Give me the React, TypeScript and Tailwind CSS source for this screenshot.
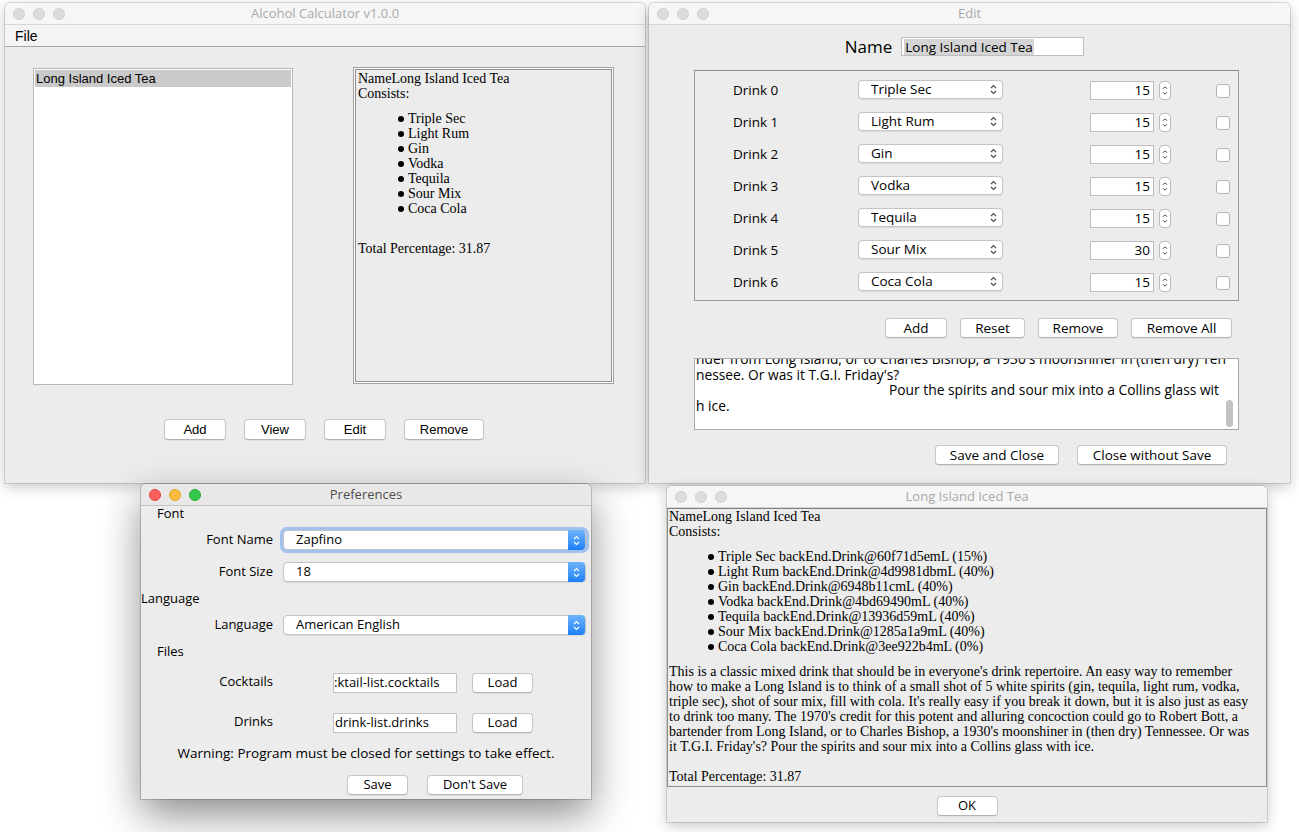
const UI = "font-['Open_Sans',sans-serif]";
const ARIAL = "font-['Liberation_Sans',Arial,sans-serif]";
const SERIF = "font-['Liberation_Serif','Times_New_Roman',serif]";

const EDIT_ROWS = [
  ["Triple Sec", "15"],
  ["Light Rum", "15"],
  ["Gin", "15"],
  ["Vodka", "15"],
  ["Tequila", "15"],
  ["Sour Mix", "30"],
  ["Coca Cola", "15"],
];

const VIEW_ITEMS = [
  "Triple Sec backEnd.Drink@60f71d5emL (15%)",
  "Light Rum backEnd.Drink@4d9981dbmL (40%)",
  "Gin backEnd.Drink@6948b11cmL (40%)",
  "Vodka backEnd.Drink@4bd69490mL (40%)",
  "Tequila backEnd.Drink@13936d59mL (40%)",
  "Sour Mix backEnd.Drink@1285a1a9mL (40%)",
  "Coca Cola backEnd.Drink@3ee922b4mL (0%)",
];

const DESCRIPTION = [
  "This is a classic mixed drink that should be in everyone's drink repertoire. An easy way to remember",
  "how to make a Long Island is to think of a small shot of 5 white spirits (gin, tequila, light rum, vodka,",
  "triple sec), shot of sour mix, fill with cola. It's really easy if you break it down, but it is also just as easy",
  "to drink too many. The 1970's credit for this potent and alluring concoction could go to Robert Bott, a",
  "bartender from Long Island, or to Charles Bishop, a 1930's moonshiner in (then dry) Tennessee. Or was",
  "it T.G.I. Friday's? Pour the spirits and sour mix into a Collins glass with ice.",
];

export default function App() {
  return (
    <div className="relative h-[832px] w-[1299px] overflow-hidden bg-white">
      <MainWindow />
      <EditWindow />
      <PreferencesWindow />
      <ViewWindow />
    </div>
  );
}

function Window({
  title,
  active = false,
  className,
  children,
}: {
  title: string;
  active?: boolean;
  className: string;
  children: React.ReactNode;
}) {
  return (
    <div
      className={`absolute flex flex-col overflow-hidden rounded-t-[5px] bg-[#ececec] ${
        active
          ? "shadow-[0_0_0_1px_rgba(0,0,0,0.18),0_16px_40px_rgba(0,0,0,0.45)]"
          : "shadow-[0_0_0_1px_rgba(0,0,0,0.12),0_4px_14px_rgba(0,0,0,0.22)]"
      } ${className}`}
    >
      <div
        className={`grid h-[22px] shrink-0 grid-cols-[80px_1fr_80px] items-center border-b ${
          active ? "border-[#c4c4c4] bg-[#e8e8e8]" : "border-[#d6d6d6] bg-[#f6f6f6]"
        }`}
      >
        <div className="flex items-center gap-[8px] pl-[8px]">
          {active ? (
            <>
              <span className="h-[12px] w-[12px] rounded-full border border-[#e0443e] bg-[#fc605c]" />
              <span className="h-[12px] w-[12px] rounded-full border border-[#dea123] bg-[#fdbc40]" />
              <span className="h-[12px] w-[12px] rounded-full border border-[#27aa35] bg-[#34c84a]" />
            </>
          ) : (
            <>
              <span className="h-[12px] w-[12px] rounded-full border border-[#d1d1d1] bg-[#dcdcdc]" />
              <span className="h-[12px] w-[12px] rounded-full border border-[#d1d1d1] bg-[#dcdcdc]" />
              <span className="h-[12px] w-[12px] rounded-full border border-[#d1d1d1] bg-[#dcdcdc]" />
            </>
          )}
        </div>
        <div
          className={`${UI} truncate text-center text-[13px] ${
            active ? "text-[#4d4d4d]" : "text-[#a9a9a9]"
          }`}
        >
          {title}
        </div>
        <div />
      </div>
      {children}
    </div>
  );
}

function MacButton({
  label,
  className,
  font = UI,
}: {
  label: string;
  className: string;
  font?: string;
}) {
  return (
    <div
      className={`${font} flex shrink-0 items-center justify-center rounded-[4px] border border-[#c6c6c6] border-b-[#b2b2b2] bg-white text-black shadow-[0_1px_1px_rgba(0,0,0,0.06)] ${className}`}
    >
      {label}
    </div>
  );
}

function UpDown({ color = "#4a4a4a", small = false }: { color?: string; small?: boolean }) {
  if (small) {
    return (
      <svg width="6" height="11" viewBox="0 0 6 11" fill="none" stroke={color} strokeWidth="1">
        <path d="M1 3.8 3 1.8 5 3.8" />
        <path d="M1 7.2 3 9.2 5 7.2" />
      </svg>
    );
  }
  return (
    <svg width="7" height="11" viewBox="0 0 7 11" fill="none" stroke={color} strokeWidth="1.1">
      <path d="M1 4 3.5 1.5 6 4" />
      <path d="M1 7 3.5 9.5 6 7" />
    </svg>
  );
}

function Bullet() {
  return <span className="mr-[4px] inline-block h-[6px] w-[6px] rounded-full bg-black align-[1px]" />;
}

/* ---------- Alcohol Calculator main window ---------- */

function MainWindow() {
  const ingredients = ["Triple Sec", "Light Rum", "Gin", "Vodka", "Tequila", "Sour Mix", "Coca Cola"];
  return (
    <Window title="Alcohol Calculator v1.0.0" className="left-[5px] top-[3px] h-[480px] w-[640px]">
      <div
        className={`${ARIAL} flex h-[22px] shrink-0 items-center border-b border-[#a6a6a6] bg-[#f4f4f4] pl-[10px] pt-px text-[14px] text-black`}
      >
        File
      </div>
      <div className="flex pl-[28px] pt-[20px]">
        <div className="mt-[1px] h-[317px] w-[260px] border border-[#b8b8b8] bg-white p-px">
          <div className={`${ARIAL} h-[17px] bg-[#cacaca] pl-px text-[13px] leading-[17px] text-black`}>
            Long Island Iced Tea
          </div>
        </div>
        <div className="ml-[60px] h-[317px] w-[261px] border border-[#a2a2a2] bg-white p-px">
          <div className={`${SERIF} h-full border border-[#8f8f8f] bg-[#ececec] pl-[2px] pt-[1px] text-[14px] leading-[15px] text-black`}>
            <div>NameLong Island Iced Tea</div>
            <div>Consists:</div>
            <div className="mt-[10px] pl-[40px]">
              {ingredients.map((name) => (
                <div key={name}>
                  <Bullet />
                  {name}
                </div>
              ))}
            </div>
            <div className="mt-[25px]">Total Percentage: 31.87</div>
          </div>
        </div>
      </div>
      <div className="mt-[34px] flex justify-center gap-[18px] pr-[2px]">
        <MacButton label="Add" font={ARIAL} className="h-[21px] w-[62px] text-[13px]" />
        <MacButton label="View" font={ARIAL} className="h-[21px] w-[62px] text-[13px]" />
        <MacButton label="Edit" font={ARIAL} className="h-[21px] w-[62px] text-[13px]" />
        <MacButton label="Remove" font={ARIAL} className="h-[21px] w-[80px] text-[13px]" />
      </div>
    </Window>
  );
}

/* ---------- Edit window ---------- */

function EditWindow() {
  return (
    <Window title="Edit" className="left-[649px] top-[3px] h-[480px] w-[641px]">
      <div className={`${UI} flex flex-col text-[13.5px] text-black`}>
        <div className="flex items-center justify-center gap-[9px] pr-[10px] pt-[12px]">
          <span className="text-[17px] leading-[19px]">Name</span>
          <div className="flex h-[19px] w-[183px] items-center border border-[#bdbdbd] bg-white pl-[2px]">
            <span className="bg-[#d4d4d4] px-px leading-[16px]">Long Island Iced Tea</span>
          </div>
        </div>

        <div className="ml-[45px] mt-[14px] h-[231px] w-[545px] border border-[#9a9a9a] border-t-[#8a8a8a] pt-[3px]">
          {EDIT_ROWS.map(([drink, amount], i) => (
            <div key={i} className="flex h-[32px] items-center pl-[38px]">
              <span className="w-[125px]">Drink {i}</span>
              <div className="-mt-[2px] flex h-[19px] w-[145px] items-center justify-between rounded-[4px] border border-[#c4c4c4] bg-white pl-[12px] pr-[5px] shadow-[0_1px_1px_rgba(0,0,0,0.08)]">
                <span>{drink}</span>
                <UpDown />
              </div>
              <div className="ml-[87px] mt-px flex h-[19px] w-[64px] items-center justify-end border border-[#bdbdbd] bg-white pr-[3px]">
                {amount}
              </div>
              <div className="ml-[5px] mt-px flex h-[19px] w-[12px] items-center justify-center rounded-[4px] border border-[#bdbdbd] bg-white">
                <UpDown small />
              </div>
              <div className="ml-[45px] mt-px h-[14px] w-[14px] rounded-[3px] border border-[#b4b4b4] bg-white" />
            </div>
          ))}
        </div>

        <div className="mt-[17px] flex justify-end gap-[13px] pr-[58px]">
          <MacButton label="Add" className="h-[20px] w-[62px]" />
          <MacButton label="Reset" className="h-[20px] w-[65px]" />
          <MacButton label="Remove" className="h-[20px] w-[80px]" />
          <MacButton label="Remove All" className="h-[20px] w-[101px]" />
        </div>

        <div className="relative ml-[45px] mt-[20px] h-[72px] w-[545px] overflow-hidden border border-[#a8a8a8] bg-white">
          <div className="-mt-[8px] whitespace-nowrap pl-[1px] text-[13.8px] leading-[15.5px]">
            <div>nder from Long Island, or to Charles Bishop, a 1930's moonshiner in (then dry) Ten</div>
            <div>nessee. Or was it T.G.I. Friday's?</div>
            <div className="pl-[193px]">Pour the spirits and sour mix into a Collins glass wit</div>
            <div>h ice.</div>
          </div>
          <div className="absolute right-[5px] top-[41px] h-[27px] w-[7px] rounded-full bg-[#c2c2c2]" />
        </div>

        <div className="mt-[15px] flex justify-end gap-[18px] pr-[63px]">
          <MacButton label="Save and Close" className="h-[20px] w-[124px]" />
          <MacButton label="Close without Save" className="h-[20px] w-[150px]" />
        </div>
      </div>
    </Window>
  );
}

/* ---------- Preferences window ---------- */

function PrefSelect({ value, focused = false }: { value: string; focused?: boolean }) {
  return (
    <div
      className={`ml-[10px] flex h-[20px] w-[303px] items-center justify-between rounded-[4px] border border-[#c2c2c2] bg-white pl-[12px] ${
        focused ? "shadow-[0_0_0_3px_rgba(100,160,240,0.55)]" : "shadow-[0_1px_1px_rgba(0,0,0,0.08)]"
      }`}
    >
      <span>{value}</span>
      <div className="flex h-[20px] w-[17px] items-center justify-center rounded-r-[4px] bg-gradient-to-b from-[#6cb3fa] to-[#1a7ff8]">
        <UpDown color="#ffffff" />
      </div>
    </div>
  );
}

function PreferencesWindow() {
  return (
    <Window title="Preferences" active className="left-[141px] top-[484px] h-[315px] w-[450px]">
      <div className={`${UI} flex flex-col text-[13px] text-black`}>
        <div className="flex h-[16px] items-center pl-[16px]">Font</div>

        <div className="mt-[7px] flex h-[22px] items-center">
          <span className="w-[132px] text-right">Font Name</span>
          <PrefSelect value="Zapfino" focused />
        </div>

        <div className="mt-[10px] flex h-[22px] items-center">
          <span className="w-[132px] text-right">Font Size</span>
          <PrefSelect value="18" />
        </div>

        <div className="mt-[5px] flex h-[22px] items-center">Language</div>

        <div className="mt-[4px] flex h-[22px] items-center">
          <span className="w-[132px] text-right">Language</span>
          <PrefSelect value="American English" />
        </div>

        <div className="mt-[5px] flex h-[22px] items-center pl-[16px]">Files</div>

        <div className="mt-[9px] flex h-[22px] items-center">
          <span className="-mt-[2px] w-[132px] text-right">Cocktails</span>
          <div className="ml-[60px] flex h-[20px] w-[124px] items-center overflow-hidden whitespace-nowrap border border-[#c2c2c2] bg-white">
            :ktail-list.cocktails
          </div>
          <MacButton label="Load" className="ml-[15px] h-[20px] w-[61px] text-[13px]" />
        </div>

        <div className="mt-[18px] flex h-[22px] items-center">
          <span className="-mt-[2px] w-[132px] text-right">Drinks</span>
          <div className="ml-[60px] flex h-[20px] w-[124px] items-center overflow-hidden whitespace-nowrap border border-[#c2c2c2] bg-white pl-px">
            drink-list.drinks
          </div>
          <MacButton label="Load" className="ml-[15px] h-[20px] w-[61px] text-[13px]" />
        </div>

        <div className="mt-[8px] flex h-[22px] items-center justify-center text-[13.5px]">
          Warning: Program must be closed for settings to take effect.
        </div>

        <div className="mt-[10px] flex h-[22px] items-center pl-[206px]">
          <MacButton label="Save" className="h-[20px] w-[61px] text-[13px]" />
          <MacButton label="Don't Save" className="ml-[19px] h-[20px] w-[96px] text-[13px]" />
        </div>
      </div>
    </Window>
  );
}

/* ---------- View window ---------- */

function ViewWindow() {
  return (
    <Window title="Long Island Iced Tea" className="left-[667px] top-[486px] h-[336px] w-[600px]">
      <div
        className={`${SERIF} h-[279px] overflow-hidden whitespace-nowrap border border-[#8d8d8d] border-t-[#7f7f7f] pl-[1px] text-[14px] leading-[15px] text-black`}
      >
        <div>NameLong Island Iced Tea</div>
        <div>Consists:</div>
        <div className="mt-[10px] pl-[39px]">
          {VIEW_ITEMS.map((item) => (
            <div key={item}>
              <Bullet />
              {item}
            </div>
          ))}
        </div>
        <div className="mt-[10px]">
          {DESCRIPTION.map((line) => (
            <div key={line}>{line}</div>
          ))}
        </div>
        <div className="mt-[15px]">Total Percentage: 31.87</div>
      </div>
      <div className="mt-[9px] flex justify-center">
        <MacButton label="OK" className="h-[20px] w-[61px] text-[13px]" />
      </div>
    </Window>
  );
}
